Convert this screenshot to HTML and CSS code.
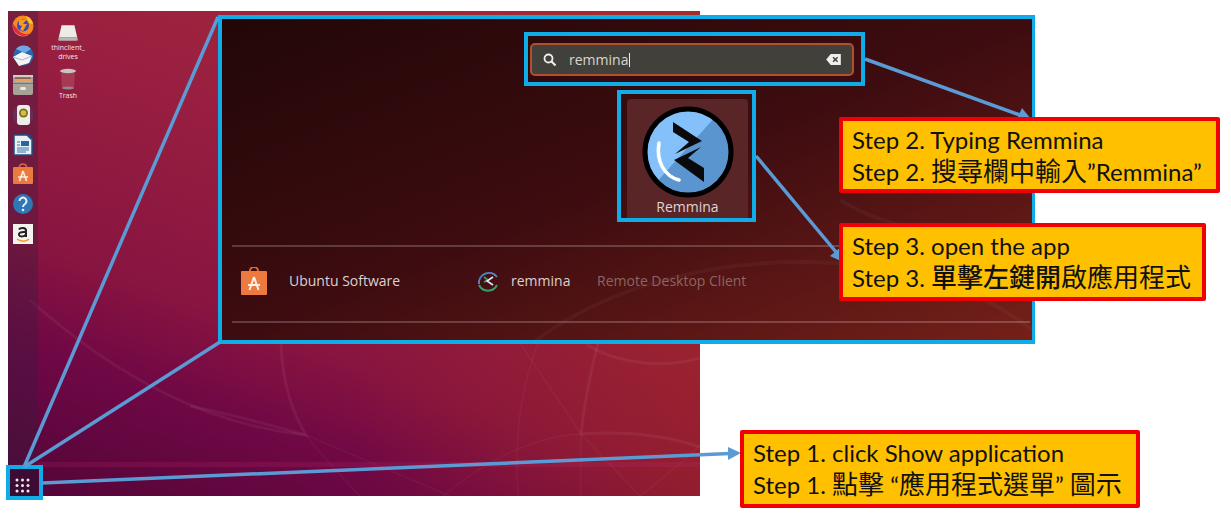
FILE: index.html
```html
<!DOCTYPE html>
<html lang="en">
<head>
<meta charset="utf-8">
<title>Open Remmina</title>
<link rel="stylesheet" href="styles.css">
</head>
<body>
<main class="canvas">
  <section class="desktop">
    <svg class="swirl" viewBox="8 11 692 485" aria-hidden="true">
      <g fill="none" stroke="#fff">
        <g stroke-opacity=".055" stroke-width="3">
          <path d="M281 343C282 380 291 410 306 435C270 425 235 415 190 406"/>
          <path d="M598 343C590 375 584 405 581 434C625 431 665 435 700 447"/>
          <path d="M587 345C620 365 665 368 700 358"/>
          <path d="M30 300C120 380 210 425 306 435"/>
        </g>
        <g stroke-opacity=".04" stroke-width="1.500">
          <path d="M538 343C522 385 514 430 518 496"/>
          <path d="M306 435L450 496M306 435C325 460 345 480 360 496"/>
          <path d="M443 496C480 465 530 436 581 434M581 434V496"/>
          <path d="M520 343L581 434L640 496M700 445C680 465 660 480 640 496"/>
        </g>
      </g>
    </svg>
    <nav class="dock">
      <ul class="dock-list">
        <li class="dock-item"><svg viewBox="0 0 22 22"><circle cx="11" cy="11" r="10.500" fill="#f68a1e"/><path d="M14 1a10.500 10.500 0 0 1 7 8l-4-1z" fill="#ffc42e"/><path d="M1 9a10.500 10.500 0 0 0 18 8.500A9 9 0 0 1 7 16z" fill="#de2a45"/><circle cx="11" cy="10.500" r="6" fill="#3a4db5"/><path d="M7 5h7l-3 4h4l-4 7-3-1 2-4-3-1z" fill="#fa9a20"/></svg></li>
        <li class="dock-item"><svg viewBox="0 0 22 22"><circle cx="11.500" cy="10.500" r="10" fill="#2a66b0"/><path d="M4 4a10 10 0 0 1 15 0l-6 4z" fill="#6fa9e4"/><path d="M1 12l9-5 10 4-3 7-10 3z" fill="#f4f5f6"/><path d="M1 12l9 3 10-4" fill="none" stroke="#a8b8c8" stroke-width="1"/></svg></li>
        <li class="dock-item"><svg viewBox="0 0 22 22"><rect x="1" y="1" width="20" height="20" rx="2" fill="#a8a399"/><rect x="1" y="1" width="20" height="2" fill="#d2cec6"/><rect x="3" y="4" width="16" height="4" fill="#e2a268"/><rect x="3" y="3.500" width="16" height="1.200" fill="#5c5147"/><rect x="1" y="9" width="20" height="1" fill="#7b766e"/><rect x="8" y="13" width="6" height="3" rx="1.500" fill="#e8e8e4"/></svg></li>
        <li class="dock-item"><svg viewBox="0 0 22 22"><circle cx="11" cy="11" r="10.500" fill="#5a4a80" opacity=".4"/><rect x="5" y="1" width="13" height="20" rx="3" fill="#efeee6"/><circle cx="11.500" cy="9" r="4.500" fill="#7c6e22"/><circle cx="11.500" cy="9" r="2.800" fill="#d2bf48"/></svg></li>
        <li class="dock-item"><svg viewBox="0 0 22 22"><path d="M2 1h14l4 4v16H2z" fill="#e9f0f6" stroke="#1d4f82" stroke-width="1.500"/><path d="M14 1h5v5z" fill="#1d4f82"/><rect x="9" y="7" width="8" height="5" fill="#28679e"/><path d="M5 8h3M5 11h3M5 14h12M5 16h12M5 18h9" stroke="#3a77ad" stroke-width="1"/></svg></li>
        <li class="dock-item"><svg viewBox="0 0 22 22"><path d="M7.500 4a3.500 3 0 0 1 7 0" fill="none" stroke="#e0692f" stroke-width="1.600"/><rect x="1" y="4" width="20" height="17" rx="1" fill="#ec7a3e"/><path d="M11 8l-3.500 10M11 8l3.500 10M6 14h10" stroke="#fbeee6" stroke-width="1.600" fill="none"/></svg></li>
        <li class="dock-item"><svg viewBox="0 0 22 22"><circle cx="11" cy="11" r="10" fill="#2f78b7"/><path d="M7.500 8a3.500 3.500 0 1 1 5.500 3c-1.500 1-2 1.500-2 3" fill="none" stroke="#e8f0f8" stroke-width="2"/><circle cx="11" cy="17" r="1.300" fill="#e8f0f8"/></svg></li>
        <li class="dock-item"><svg viewBox="0 0 22 22"><rect x="1" y="1" width="20" height="20" fill="#f4f2ec"/><path d="M5 16c4 3 9 3 12 0" fill="none" stroke="#ee9a22" stroke-width="1.500"/><path d="M7 6.500c1-2 7-2.500 7 1V14M14 9c-6-.5-7.500 1-7 3s6 2 7-1" fill="none" stroke="#222" stroke-width="2"/></svg></li>
      </ul>
      <div class="show-apps"></div>
    </nav>
    <div class="icons">
      <figure class="desk-icon">
        <svg class="desk-glyph" viewBox="0 0 24 18"><path d="M5 0h14l3 13H2z" fill="#ecebe6"/><rect x="1.500" y="13" width="21" height="4" rx="1" fill="#b9b7b0"/></svg>
        <figcaption>thinclient_<br>drives</figcaption>
      </figure>
      <figure class="desk-icon">
        <svg class="desk-glyph trash" viewBox="0 0 20 22"><path d="M3 3h14l-1 17H4z" fill="#a63a55"/><ellipse cx="10" cy="3" rx="8" ry="2.200" fill="#c8c4c0"/><ellipse cx="10" cy="20" rx="6" ry="1.500" fill="#8f8a8a"/></svg>
        <figcaption>Trash</figcaption>
      </figure>
    </div>
    <div class="panel-band"></div>
  </section>

  <section class="overview">
    <svg class="overview-swirl" viewBox="222 19 810 321" aria-hidden="true">
      <g fill="none" stroke="#fff" stroke-opacity=".035" stroke-width="4">
        <path d="M530 345C600 290 700 262 800 262C880 262 970 280 1032 330"/>
        <path d="M840 200C905 240 985 238 1032 225"/>
      </g>
    </svg>
    <div class="search-mark">
      <div class="search-input">
        <svg class="search-glyph" viewBox="0 0 14 14"><circle cx="5.500" cy="5.500" r="4" fill="none" stroke="#eee" stroke-width="1.800"/><path d="M8.500 8.500l4 4" stroke="#eee" stroke-width="2.200"/></svg>
        <span class="search-text">remmina</span><span class="caret"></span>
        <svg class="clear-glyph" viewBox="0 0 16 12"><path d="M5 0h11v12H5L0 6z" fill="#eee"/><path d="M7.500 3.500l5 5M12.500 3.500l-5 5" stroke="#41403a" stroke-width="1.600"/></svg>
      </div>
    </div>
    <div class="app-mark">
      <div class="app-tile">
        <svg class="app-glyph" viewBox="0 0 92 92">
          <defs><clipPath id="disc"><circle cx="46" cy="46" r="43"/></clipPath></defs>
          <circle cx="46" cy="46" r="43" fill="#84c1fb"/>
          <path d="M74 10L12 79L46 95L95 90V10Z" fill="#5b95cf" clip-path="url(#disc)"/>
          <circle cx="46" cy="46" r="43" fill="none" stroke="#000" stroke-width="5"/>
          <path d="M31 16L60 35L33 48L47 36L31 26Z" fill="#0a0a0c"/>
          <path d="M32 54L59 41L46 52L62 62L62 76Z" fill="#0a0a0c"/>
          <path d="M17 37C14 55 22 70 37 74" fill="none" stroke="#fff" stroke-width="3.600" stroke-linecap="round"/>
        </svg>
        <span class="app-label">Remmina</span>
      </div>
    </div>
    <div class="results">
      <div class="provider">
        <svg class="provider-glyph" viewBox="0 0 28 28"><path d="M10 4a4 4 0 0 1 8 0" fill="none" stroke="#e0692f" stroke-width="2"/><rect x="1" y="4" width="26" height="24" rx="1" fill="#ec7a3e"/><path d="M14 10l-4.500 13M14 10l4.500 13M8 18h12" stroke="#fbeee6" stroke-width="2" fill="none"/></svg>
        <span class="provider-name">Ubuntu Software</span>
      </div>
      <div class="result">
        <svg class="result-glyph" viewBox="0 0 24 24"><path d="M3 15A10 10 0 0 1 21 8" fill="none" stroke="#4f86c6" stroke-width="2"/><path d="M3 16a10 10 0 0 0 18 0" fill="none" stroke="#2fa36b" stroke-width="2"/><path d="M8 8l4 3-4 2" fill="none" stroke="#2fa36b" stroke-width="1.600"/><path d="M17 8l-6 4 6 4" fill="none" stroke="#dce8f2" stroke-width="1.600"/></svg>
        <span class="result-name">remmina</span>
        <span class="result-desc">Remote Desktop Client</span>
      </div>
    </div>
  </section>

  <div class="launcher-mark">
    <svg class="grid-glyph" viewBox="0 0 15 15"><g fill="#f2e8ee"><circle cx="2" cy="2" r="1.500"/><circle cx="7.500" cy="2" r="1.500"/><circle cx="13" cy="2" r="1.500"/><circle cx="2" cy="7.500" r="1.500"/><circle cx="7.500" cy="7.500" r="1.500"/><circle cx="13" cy="7.500" r="1.500"/><circle cx="2" cy="13" r="1.500"/><circle cx="7.500" cy="13" r="1.500"/><circle cx="13" cy="13" r="1.500"/></g></svg>
  </div>

  <svg class="pointers" viewBox="0 0 1231 520" aria-hidden="true">
    <g stroke="#5b9bd5" stroke-width="3.500" fill="none">
      <path d="M24 467L218 17M24 467L220 342"/>
      <path d="M42 483L730 453.500"/>
      <path d="M865 59L1020 115"/>
      <path d="M756 156L836 252"/>
    </g>
    <g fill="#5b9bd5">
      <path d="M741 453L728 447V460z"/>
      <path d="M1031 119L1022 108L1016 121z"/>
      <path d="M845 263L841 247L830 256z"/>
    </g>
  </svg>

  <aside class="callout callout-2"><p>Step 2. Typing Remmina</p><p>Step 2. <span class="cjk">搜尋欄中輸入</span>”Remmina”</p></aside>
  <aside class="callout callout-3"><p>Step 3. open the app</p><p>Step 3. <span class="cjk heavy">單擊左鍵開</span><span class="cjk">啟應用程式</span></p></aside>
  <aside class="callout callout-1"><p>Step 1. click Show application</p><p>Step 1. <span class="cjk">點擊</span> “<span class="cjk">應用程式選單</span>” <span class="cjk">圖示</span></p></aside>
</main>
</body>
</html>
```
FILE: styles.css
```css
* { box-sizing: border-box; }
html, body { margin: 0; padding: 0; background: #fff; }
.canvas { position: relative; width: 1231px; height: 520px; overflow: hidden; font-family: "Open Sans", "Noto Sans", sans-serif; }

.desktop {
  position: absolute; left: 8px; top: 11px; width: 692px; height: 485px; overflow: hidden;
  background:
    linear-gradient(to right, rgba(170, 50, 10, 0) 50%, rgba(170, 50, 10, .32) 100%),
    linear-gradient(20deg, #520538 0%, #700845 22%, #881440 35%, #9a2040 66%, #a52838 100%);
  display: flex;
}
.swirl { position: absolute; inset: 0; width: 100%; height: 100%; }
.dock { position: relative; width: 30px; height: 100%; background: rgba(50, 30, 60, .33); display: flex; flex-direction: column; justify-content: space-between; }
.dock-list { list-style: none; margin: 0; padding: 4px 0 0 4px; display: flex; flex-direction: column; gap: 7.700px; }
.dock-item { width: 22px; height: 22px; }
.dock-item svg { display: block; width: 22px; height: 22px; }
.show-apps { height: 29px; background: rgba(30, 10, 40, .3); }
.icons { position: relative; display: flex; flex-direction: column; align-items: center; gap: 7px; width: 60px; padding-top: 14px; }
.desk-icon { margin: 0; display: flex; flex-direction: column; align-items: center; gap: 2px; color: #f0e6ea; font-size: 7px; line-height: 8.500px; text-align: center; }
.desk-glyph { width: 22px; height: 17px; }
.desk-glyph.trash { height: 22px; }
.panel-band { position: absolute; left: 30px; right: 0; bottom: 29px; height: 5px; background: rgba(190, 40, 110, .2); }

.overview {
  position: absolute; left: 218px; top: 15px; width: 817px; height: 329px;
  border: 4px solid #10ace8; border-right-width: 3px;
  background: linear-gradient(to bottom right, #220707 0%, #3d0c10 50%, #752019 100%);
  display: flex; flex-direction: column; align-items: flex-start;
  color: #eee; isolation: isolate;
}
.overview-swirl { position: absolute; inset: 0; width: 100%; height: 100%; z-index: -1; }
.search-mark { width: 341px; height: 54px; margin: 13px 0 0 302px; border: 4px solid #10ace8; padding: 7px 7px 6px 2px; }
.search-input { height: 33px; border: 2px solid #b0502f; border-radius: 5px; background: #41403a; display: flex; align-items: center; padding: 0 11px; font-size: 14px; }
.search-glyph { width: 14px; height: 14px; margin-right: 12px; flex: none; }
.search-text { color: #d8d6d0; }
.caret { width: 1px; height: 14px; background: #eee; margin-left: 1px; }
.clear-glyph { width: 15px; height: 11px; margin-left: auto; }
.app-mark { width: 139px; height: 132px; margin: 4px 0 0 395px; border: 4px solid #10ace8; padding: 5px 4px 0 6px; }
.app-tile { height: 100%; border-radius: 4px 4px 0 0; background: #5a2526; display: flex; flex-direction: column; align-items: center; padding-top: 7px; color: #ddd6d4; font-size: 14px; }
.app-glyph { width: 92px; height: 92px; flex: none; }
.app-label { line-height: 18px; }
.results { width: 798px; height: 78px; margin: 23px 0 0 10px; border-top: 2px solid rgba(255, 255, 255, .2); border-bottom: 2px solid rgba(255, 255, 255, .2); display: flex; align-items: center; padding: 0 0 7px 8px; font-size: 14px; }
.provider { display: flex; align-items: center; gap: 21px; width: 236px; }
.provider-glyph { width: 28px; height: 28px; flex: none; }
.provider-name { color: #d9d2d0; }
.result { display: flex; align-items: center; }
.result-glyph { width: 24px; height: 24px; margin-right: 11px; }
.result-name { color: #d9d2d0; width: 86px; }
.result-desc { color: #8d6463; }

.launcher-mark { position: absolute; left: 6px; top: 465px; width: 37px; height: 35px; border: 4px solid #10ace8; display: flex; align-items: center; justify-content: center; padding: 6px 5px 0 0; }
.grid-glyph { width: 15px; height: 15px; }

.pointers { position: absolute; inset: 0; width: 1231px; height: 520px; pointer-events: none; }

.callout { position: absolute; border: 4px solid #f00000; border-radius: 2px; background: #ffc000; color: #111; font-family: "Lato", "Noto Sans CJK TC", sans-serif; font-size: 24px; padding: 3px 0 0 9px; white-space: nowrap; }
.callout p { margin: 0; height: 32px; line-height: 32px; }
.cjk { font-family: "Noto Sans CJK TC", sans-serif; font-size: 26px; line-height: 1; }
.heavy { font-weight: 500; }
.callout-1 { left: 740px; top: 430px; width: 400px; height: 78px; }
.callout-2 { left: 839px; top: 117px; width: 381px; height: 76px; }
.callout-3 { left: 839px; top: 223px; width: 367px; height: 78px; }
```
